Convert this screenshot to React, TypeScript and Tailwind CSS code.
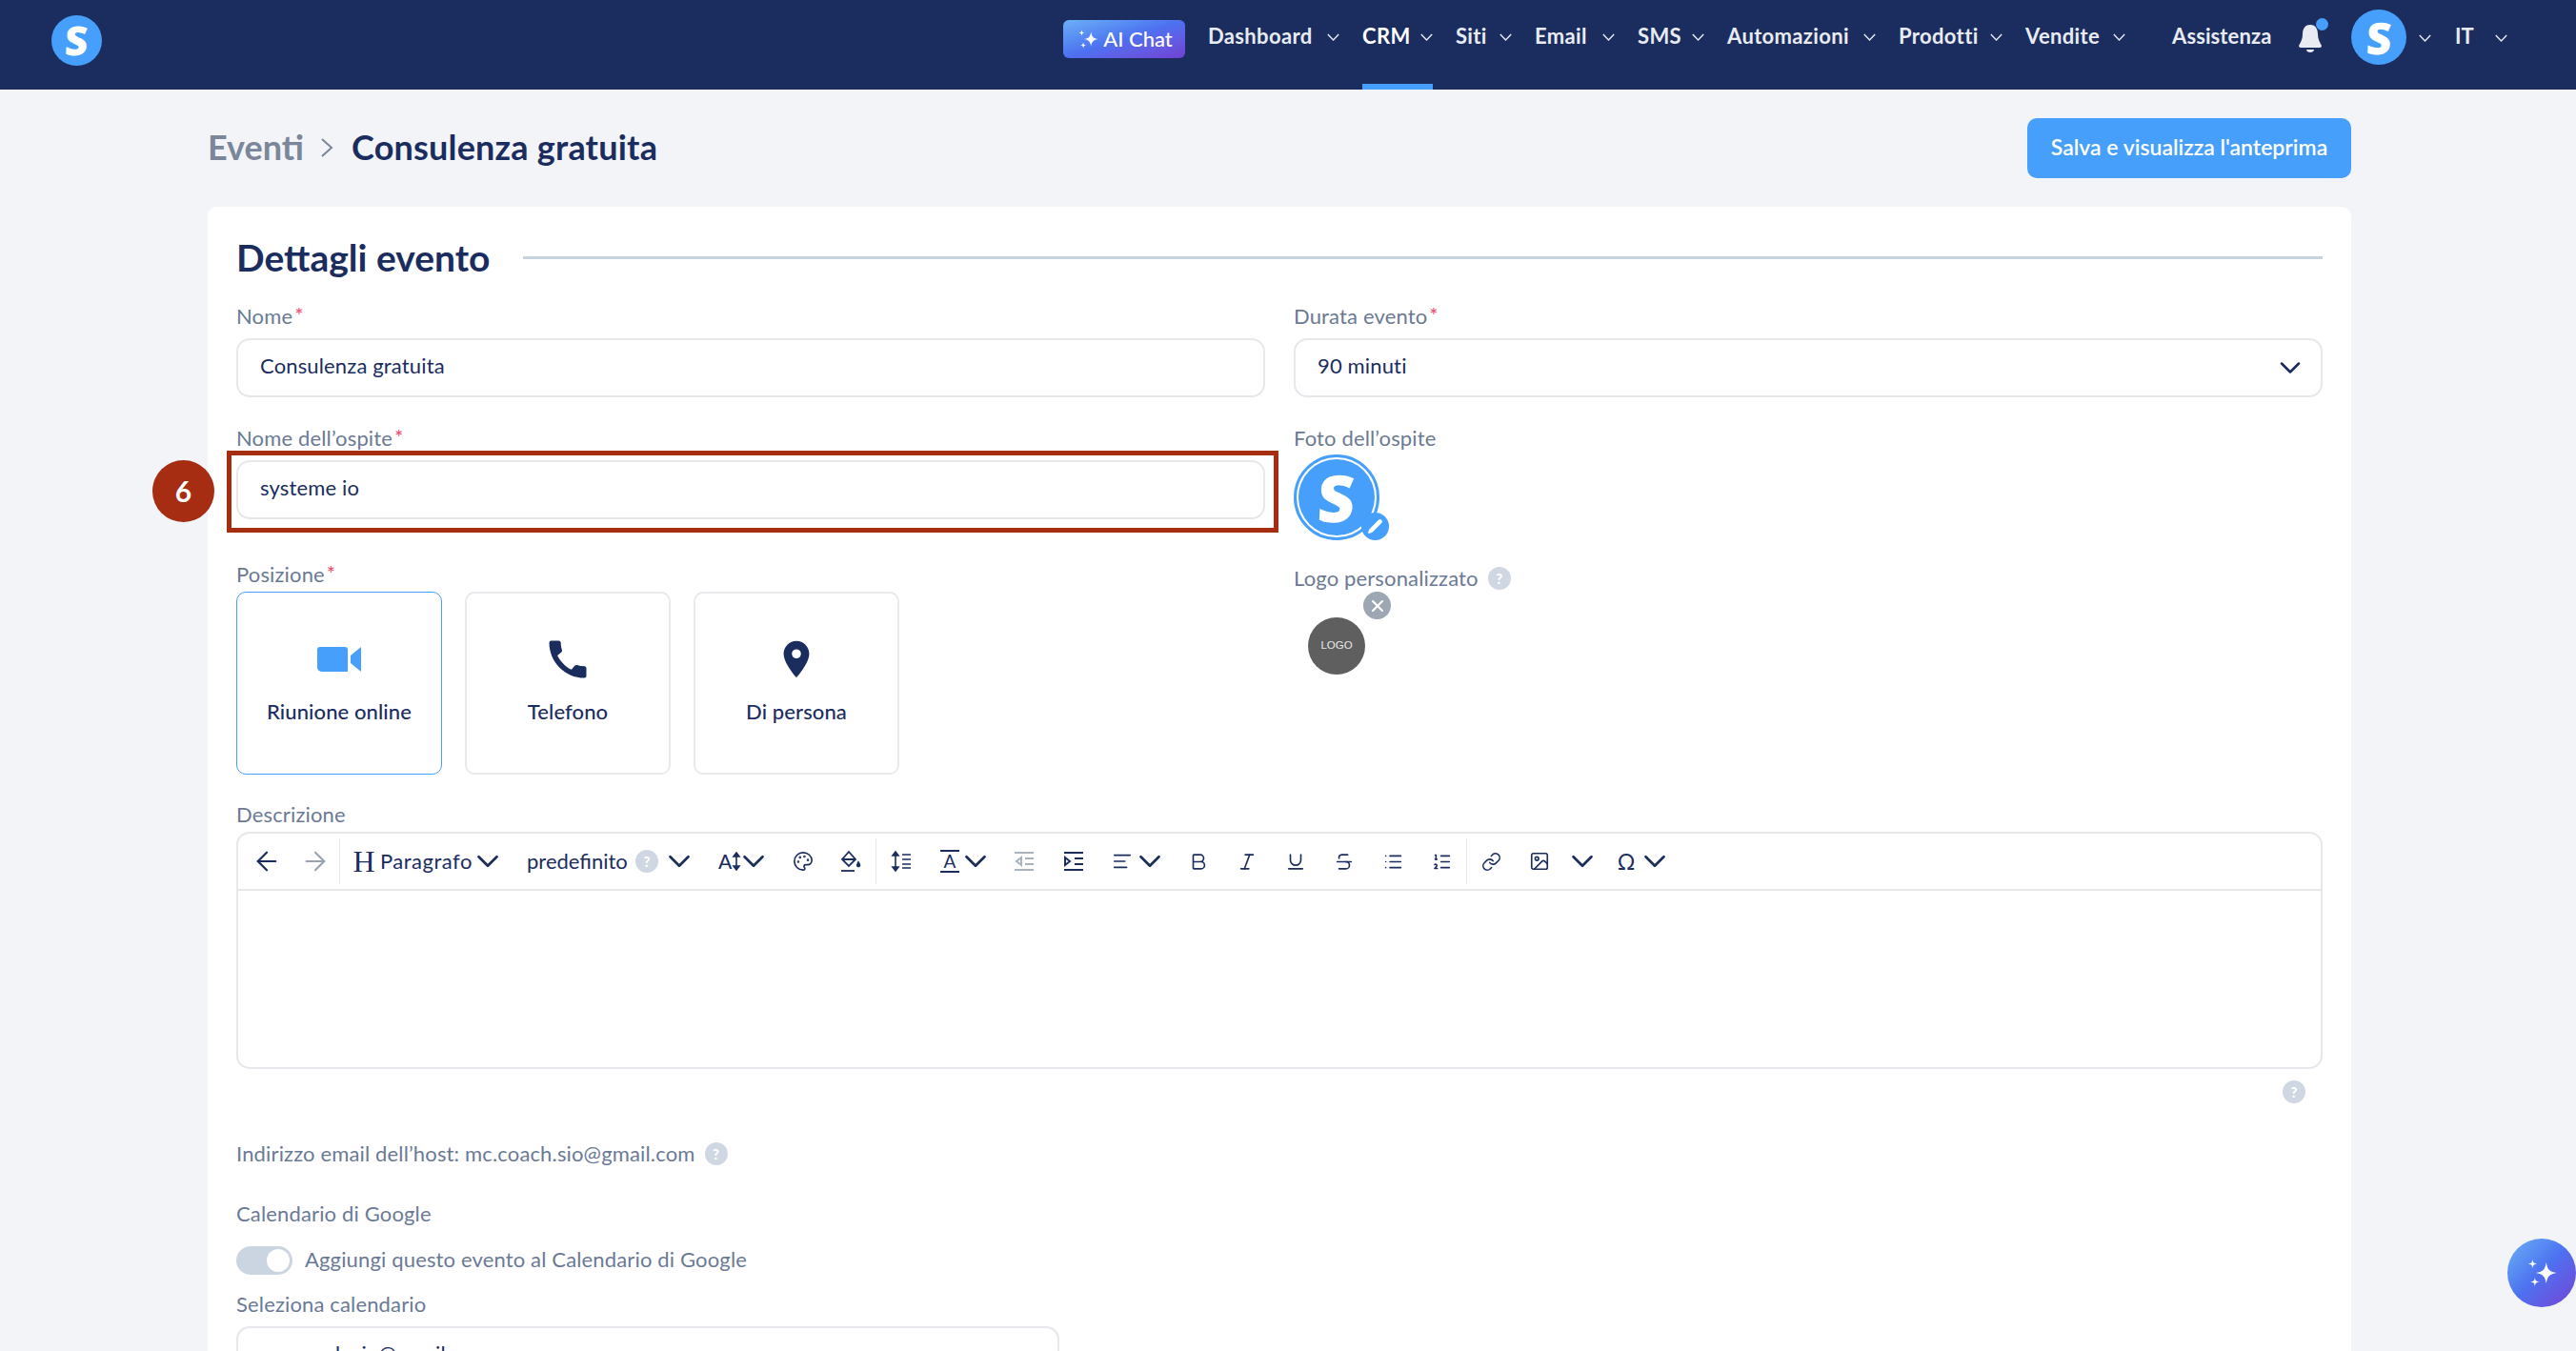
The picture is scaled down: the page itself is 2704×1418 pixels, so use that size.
import React from "react";
import {
  ArrowLeft, ArrowRight, ChevronDown, Palette, AlignLeft, Bold, Italic, Underline, Strikethrough, List, ListOrdered, Link, Image as ImageIcon, X, Pencil,
} from "lucide-react";
import { MdCall, MdLocationOn } from "react-icons/md";

const F = { fontFamily: '"Lato", "Open Sans", sans-serif' };

function LogoS({ cls, text }: { cls: string; text: string }) {
  return (
    <div className={`rounded-full bg-[#459ffb] flex items-center justify-center text-white font-extrabold leading-none ${cls}`}>
      <span className={`${text} -skew-x-3`} style={{ fontFamily: '"Open Sans", sans-serif' }}>S</span>
    </div>
  );
}

function Sparkle({ size, cls }: { size: number; cls?: string }) {
  return (
    <svg width={size} height={size} viewBox="0 0 24 24" fill="white" className={cls}>
      <path d="M15 5 C15.8 9.8 17.2 11.2 22 12 C17.2 12.8 15.8 14.2 15 19 C14.2 14.2 12.8 12.8 8 12 C12.8 11.2 14.2 9.8 15 5Z" />
      <path d="M6 3 C6.3 5.2 6.8 5.7 9 6 C6.8 6.3 6.3 6.8 6 9 C5.7 6.8 5.2 6.3 3 6 C5.2 5.7 5.7 5.2 6 3Z" />
      <path d="M7.5 15 C7.8 17.2 8.3 17.7 10.5 18 C8.3 18.3 7.8 18.8 7.5 21 C7.2 18.8 6.7 18.3 4.5 18 C6.7 17.7 7.2 17.2 7.5 15Z" />
    </svg>
  );
}

function NavChevron() {
  return (
    <svg width="13" height="8" viewBox="0 0 13 8" fill="none" stroke="#e8ebf1" strokeWidth="1.4" className="mt-[3px] shrink-0">
      <path d="M0.8 1 L6.5 7 L12.2 1" />
    </svg>
  );
}

const navItems = [
  { label: "Dashboard", w: "w-[112px]" },
  { label: "CRM", w: "w-[48px]", active: true },
  { label: "Siti", w: "w-[33px]" },
  { label: "Email", w: "w-[58px]" },
  { label: "SMS", w: "w-[44px]" },
  { label: "Automazioni", w: "w-[130px]" },
  { label: "Prodotti", w: "w-[83px]" },
  { label: "Vendite", w: "w-[79px]" },
];

function Help({ cls = "" }: { cls?: string }) {
  return (
    <span className={`w-[24px] h-[24px] rounded-full bg-[#cfd7e3] text-white flex items-center justify-center text-[15px] font-black leading-none shrink-0 ${cls}`}>?</span>
  );
}

function Label({ children, required, cls = "" }: { children: React.ReactNode; required?: boolean; cls?: string }) {
  return (
    <div className={`h-[24px] flex items-center text-[22px] leading-[24px] text-[#6b7a94] tracking-[0.15px] ${cls}`}>
      {children}
      {required && <span className="text-[#f0476c] ml-[2px] -mt-[2px]">*</span>}
    </div>
  );
}

function Field({ children, cls = "w-full" }: { children: React.ReactNode; cls?: string }) {
  return (
    <div className={`h-[62px] shrink-0 border-2 border-[#e6e8ec] rounded-[14px] bg-white flex items-center pl-[23px] pr-[20px] pb-[5px] text-[22px] text-[#1b2d5f] tracking-[0.15px] ${cls}`}>
      {children}
    </div>
  );
}

function Tb({ cls = "", children }: { cls?: string; children: React.ReactNode }) {
  return <div className={`w-[22px] h-[30px] shrink-0 flex items-center justify-center text-[#1b2d5f] ${cls}`}>{children}</div>;
}

function Chev({ cls = "" }: { cls?: string }) {
  return (
    <Tb cls={cls}>
      <ChevronDown size={38} strokeWidth={1.7} className="shrink-0" />
    </Tb>
  );
}

function Sep({ cls = "" }: { cls?: string }) {
  return <div className={`w-px h-[48px] bg-[#e6e8ec] shrink-0 ${cls}`} />;
}

function IndentIcon({ dir }: { dir: "in" | "out" }) {
  return (
    <svg width="22" height="22" viewBox="0 0 22 22" fill="none" stroke="currentColor" strokeWidth="2">
      <path d="M1 2 H21 M1 20 H21 M12 8 H21 M12 14 H21" />
      {dir === "in" ? <path d="M2 7 L7 11 L2 15 Z" /> : <path d="M8 7 L3 11 L8 15 Z" />}
    </svg>
  );
}

function PlaceCard({ icon, label, active }: { icon: React.ReactNode; label: string; active?: boolean }) {
  return (
    <div className={`w-[216px] h-[192px] rounded-[10px] ${active ? "border border-[#459ffb] pt-[1px]" : "border-2 border-[#e8eaee]"} flex flex-col items-center`}>
      <div className="h-[46px] mt-[46px] flex items-center justify-center">{icon}</div>
      <div className="mt-[20px] text-[22px] tracking-[0.1px] leading-[24px] font-medium text-[#1b2d5f] whitespace-nowrap">{label}</div>
    </div>
  );
}

export default function App() {
  return (
    <div className="relative w-[2704px] h-[1418px] overflow-hidden bg-[#f2f4f8]" style={F}>
      <header className="h-[94px] bg-[#1b2d5f] flex items-center pl-[54px] pr-[72px]">
        <LogoS cls="w-[53px] h-[53px] -mt-[10px]" text="text-[42px]" />
        <div className="flex-1" />
        <div className="w-[128px] h-[40px] -mt-[13px] rounded-[6px] bg-gradient-to-br from-[#6cb0f5] via-[#4d70f0] to-[#7040d4] flex items-center justify-center text-white text-[22px] font-medium mr-[24px]">
          <Sparkle size={26} cls="mr-[3px]" />
          AI Chat
        </div>
        {navItems.map((n) => (
          <div key={n.label} className={`h-[94px] flex items-center mr-[24px] pb-[14px] border-b-[6px] ${n.active ? "border-[#459ffb]" : "border-transparent"}`}>
            <span className={`${n.w} whitespace-nowrap text-[22px] tracking-[0.35px] font-bold ${n.active ? "text-white" : "text-[#e8ebf1]"} mr-[13px]`}>{n.label}</span>
            <NavChevron />
          </div>
        ))}
        <span className="ml-[25px] w-[107px] -mt-[20px] text-[22px] tracking-[0.1px] font-bold text-[#e8ebf1] whitespace-nowrap">Assistenza</span>
        <div className="relative ml-[25px] w-[26px] h-[30px] -mt-[14px]">
          <svg width="26" height="30" viewBox="0 0 26 30" fill="#e8ebf1">
            <path d="M13 1 C7 1 5 6 5 11 C5 16 3 19 1 23 C1 24 2 25 3 25 H23 C24 25 25 24 25 23 C23 19 21 16 21 11 C21 6 19 1 13 1Z" />
            <path d="M9 27 H17 C17 29 15 30 13 30 C11 30 9 29 9 27Z" />
          </svg>
          <span className="absolute -top-[6px] right-[-6px] w-[13px] h-[13px] rounded-full bg-[#459ffb]" />
        </div>
        <LogoS cls="w-[58px] h-[58px] ml-[30px] -mt-[16px]" text="text-[46px]" />
        <div className="ml-[13px] -mt-[17px] flex items-center"><NavChevron /></div>
        <span className="ml-[25px] w-[18px] -mt-[20px] text-[22px] font-bold text-[#e8ebf1]">IT</span>
        <div className="ml-[24px] -mt-[17px] flex items-center"><NavChevron /></div>
      </header>

      <main className="pl-[218px] pr-[236px] pt-[30px]">
        <div className="h-[63px] flex items-center justify-between">
          <div className="flex items-center -mt-[3px]">
            <span className="text-[36px] font-bold text-[#7a8699] w-[100px]">Eventi</span>
            <svg width="14" height="22" viewBox="0 0 14 22" fill="none" stroke="#7a8699" strokeWidth="2" className="ml-[18px] mr-[19px] mt-[2px]"><path d="M2 2 L12 11 L2 20" /></svg>
            <span className="text-[36px] tracking-[0.2px] font-bold text-[#1b2d5f] whitespace-nowrap">Consulenza gratuita</span>
          </div>
          <button className="w-[340px] h-[63px] rounded-[10px] bg-[#459ffb] text-white text-[23px] font-semibold pb-[3px]">Salva e visualizza l'anteprima</button>
        </div>

        <section className="mt-[30px] bg-white rounded-t-[10px] px-[30px] pt-[31px] h-[1300px]">
          <div className="h-[46px] flex items-center">
            <h1 className="text-[39px] font-bold text-[#1b2d5f] whitespace-nowrap w-[265px] -mt-[2px]">Dettagli evento</h1>
            <div className="ml-[36px] flex-1 h-[3px] bg-[#c9d3df] -mt-[1px]" />
          </div>

          <div className="mt-[26px] grid grid-cols-2 gap-x-[30px]">
            <div>
              <Label required cls="mb-[11px]">Nome</Label>
              <Field>Consulenza gratuita</Field>
            </div>
            <div>
              <Label required cls="mb-[11px]">Durata evento</Label>
              <Field cls="w-full justify-between">
                90 minuti
                <ChevronDown size={36} strokeWidth={1.7} className="mt-[5px] -mr-[6px]" />
              </Field>
            </div>

            <div className="mt-[31px]">
              <Label required cls="mb-[11px]">Nome dell’ospite</Label>
              <div className="relative">
                <Field>systeme io</Field>
                <div className="absolute -left-[10px] -right-[14px] -top-[10px] -bottom-[14px] border-[5px] border-[#a62c12]" />
                <div className="absolute -left-[88px] top-0 w-[65px] h-[65px] rounded-full bg-[#a62c12] text-white text-[30px] font-bold flex items-center justify-center">6</div>
              </div>
              <Label required cls="mt-[46px] mb-[6px]">Posizione</Label>
              <div className="flex gap-[24px]">
                <PlaceCard
                  active
                  label="Riunione online"
                  icon={
                    <svg width="46" height="26" viewBox="0 0 46 26" fill="#459ffb">
                      <path d="M3 0 H29 C31 0 32 1 32 3 V26 H6 C2 26 0 24 0 21 V3 C0 1 1 0 3 0Z" />
                      <path d="M35 9 L46 0 V26 L35 17Z" />
                    </svg>
                  }
                />
                <PlaceCard label="Telefono" icon={<MdCall size={52} className="text-[#1b2d5f] -scale-x-100 rotate-[90deg]" />} />
                <PlaceCard label="Di persona" icon={<MdLocationOn size={46} className="text-[#1b2d5f]" />} />
              </div>
            </div>

            <div className="mt-[31px]">
              <Label>Foto dell’ospite</Label>
              <div className="relative mt-[5px] w-[90px] h-[90px] rounded-full border-[3px] border-[#459ffb] p-[2px]">
                <LogoS cls="w-full h-full" text="text-[68px]" />
                <div className="absolute -right-[13px] -bottom-[3px] w-[29px] h-[29px] rounded-full bg-[#459ffb] flex items-center justify-center">
                  <Pencil size={17} fill="white" stroke="white" strokeWidth={1} />
                </div>
              </div>
              <Label cls="mt-[28px]">
                Logo personalizzato
                <Help cls="ml-[10px]" />
              </Label>
              <div className="relative w-[120px] h-[89px] mt-[2px]">
                <div className="absolute left-[73px] top-0 w-[29px] h-[29px] rounded-full bg-[#9ca7b3] flex items-center justify-center">
                  <X size={20} color="white" strokeWidth={2.5} />
                </div>
                <div className="absolute left-[15px] top-[27px] w-[60px] h-[60px] rounded-full bg-[#5f5f5f] flex items-center justify-center text-[#e8e8e8] text-[11.5px]" style={{ fontFamily: '"Liberation Sans", sans-serif' }}>LOGO</div>
              </div>
            </div>
          </div>

          <Label cls="mt-[30px] mb-[6px]">Descrizione</Label>
          <div className="h-[249px] border-2 border-[#e6e8ec] rounded-[14px]">
            <div className="h-[60px] border-b-2 border-[#e6e8ec] flex items-center text-[#1b2d5f] pl-[4px]">
              <div className="w-[51px] flex justify-center"><ArrowLeft size={32} strokeWidth={1.6} /></div>
              <div className="w-[51px] flex justify-center text-[#9aa5b1]"><ArrowRight size={32} strokeWidth={1.6} /></div>
              <Sep />
              <Tb cls="ml-[15px] !w-[20px] text-[32px] leading-none"><span style={{ fontFamily: '"Liberation Serif", serif' }}>H</span></Tb>
              <div className="ml-[7px] w-[96px] text-[22px] tracking-[0.5px] whitespace-nowrap -mt-[2px]">Paragrafo</div>
              <Chev cls="ml-[6px]" />
              <div className="ml-[30px] w-[105px] text-[22px] whitespace-nowrap -mt-[2px]">predefinito</div>
              <Help cls="ml-[9px]" />
              <Chev cls="ml-[11px]" />
              <div className="ml-[30px] w-[26px] flex items-center text-[21px] font-medium">A<svg width="10" height="20" viewBox="0 0 10 20" fill="currentColor" stroke="currentColor" strokeWidth="1.6"><path d="M5 3 V17" /><path d="M5 1 L8 5 H2 Z M5 19 L8 15 H2 Z" /></svg></div>
              <Chev />
              <Tb cls="ml-[30px]"><Palette size={22} strokeWidth={1.8} /></Tb>
              <Tb cls="ml-[28px]">
                <svg width="22" height="24" viewBox="0 0 22 24" fill="none" stroke="currentColor" strokeWidth="1.8">
                  <path d="M9 2 L16 10 L9 17 L2 10 Z M2 10 H16" />
                  <path d="M19 13 C20.5 15 21 16 20 17 C19 18 17.5 17 18 15.5Z" fill="currentColor" />
                  <path d="M1 22 H15" />
                </svg>
              </Tb>
              <Sep cls="ml-[15px]" />
              <Tb cls="ml-[15px]">
                <svg width="22" height="22" viewBox="0 0 22 22" fill="currentColor" stroke="currentColor" strokeWidth="1.6">
                  <path d="M5 3 V19" /><path d="M5 1 L8 5 H2Z M5 21 L8 17 H2Z" />
                  <path d="M12 4 H21 M12 9 H21 M12 14 H21 M12 18 H21" />
                </svg>
              </Tb>
              <Tb cls="ml-[29px]">
                <div className="w-[20px] border-y-2 border-current text-[19px] leading-[20px] text-center">A</div>
              </Tb>
              <Chev cls="ml-[5px]" />
              <Tb cls="ml-[29px] text-[#a9b2bd]"><IndentIcon dir="out" /></Tb>
              <Tb cls="ml-[30px]"><IndentIcon dir="in" /></Tb>
              <Tb cls="ml-[29px]"><AlignLeft size={24} strokeWidth={1.8} /></Tb>
              <Chev cls="ml-[7px]" />
              <Tb cls="ml-[29px]"><Bold size={23} strokeWidth={1.8} /></Tb>
              <Tb cls="ml-[29px]"><Italic size={23} strokeWidth={1.8} /></Tb>
              <Tb cls="ml-[29px]"><Underline size={23} strokeWidth={1.8} /></Tb>
              <Tb cls="ml-[29px]"><Strikethrough size={23} strokeWidth={1.8} /></Tb>
              <Tb cls="ml-[29px]"><List size={21} strokeWidth={1.8} /></Tb>
              <Tb cls="ml-[29px]"><ListOrdered size={21} strokeWidth={1.8} /></Tb>
              <Sep cls="ml-[15px]" />
              <Tb cls="ml-[14px]"><Link size={21} strokeWidth={1.8} /></Tb>
              <Tb cls="ml-[29px]"><ImageIcon size={22} strokeWidth={1.8} /></Tb>
              <Chev cls="ml-[23px]" />
              <Tb cls="ml-[24px] text-[23px]"><span>Ω</span></Tb>
              <Chev cls="ml-[8px]" />
            </div>
          </div>

          <div className="mt-[12px] flex justify-end pr-[18px]"><Help /></div>
          <Label cls="mt-[41px]">
            Indirizzo email dell’host: mc.coach.sio@gmail.com
            <Help cls="ml-[10px]" />
          </Label>
          <Label cls="mt-[39px]">Calendario di Google</Label>
          <div className="mt-[22px] h-[30px] flex items-center">
            <div className="w-[59px] h-[30px] rounded-full bg-[#cbd5e1] p-[3px] flex justify-end">
              <div className="w-[24px] h-[24px] rounded-full bg-white" />
            </div>
            <span className="ml-[13px] -mt-[3px] text-[22px] text-[#6b7a94] tracking-[0.15px]">Aggiungi questo evento al Calendario di Google</span>
          </div>
          <Label cls="mt-[19px] mb-[11px]">Seleziona calendario</Label>
          <Field cls="w-[864px]">mc.coach.sio@gmail.com</Field>
        </section>
      </main>

      <div className="absolute right-0 top-[1300px] w-[72px] h-[72px] rounded-full bg-gradient-to-br from-[#6cb0f5] via-[#4d70f0] to-[#7040d4] flex items-center justify-center">
        <Sparkle size={38} />
      </div>
    </div>
  );
}
